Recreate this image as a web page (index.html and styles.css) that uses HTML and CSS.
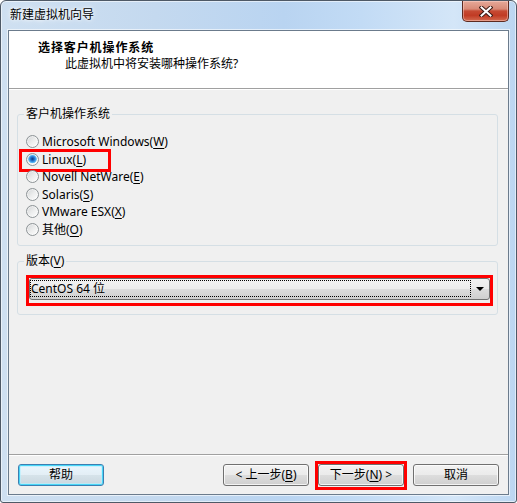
FILE: index.html
```html
<!DOCTYPE html>
<html lang="zh-CN">
<head>
<meta charset="utf-8">
<title>新建虚拟机向导</title>
<link rel="stylesheet" href="styles.css">
</head>
<body>
<div class="window">
  <div class="titlebar">
    <span class="title">新建虚拟机向导</span>
    <button class="close" aria-label="关闭">
      <svg width="14" height="11" viewBox="0 0 14 11">
        <path d="M2.5 1.5 L11.5 9.5 M11.5 1.5 L2.5 9.5" stroke="#3b1a14" stroke-width="4" stroke-linecap="square" fill="none"/>
        <path d="M2.5 1.5 L11.5 9.5 M11.5 1.5 L2.5 9.5" stroke="#ffffff" stroke-width="2" stroke-linecap="square" fill="none"/>
      </svg>
    </button>
  </div>
  <div class="client">
    <div class="header">
      <div class="h-title">选择客户机操作系统</div>
      <div class="h-sub">此虚拟机中将安装哪种操作系统?</div>
    </div>
    <div class="content">
      <fieldset class="group os">
        <legend>客户机操作系统</legend>
        <div class="options">
          <label class="opt"><span class="radio"></span><span>Microsoft Windows(<u>W</u>)</span></label>
          <label class="opt marked"><span class="radio checked"></span><span>Linux(<u>L</u>)</span></label>
          <label class="opt"><span class="radio"></span><span>Novell NetWare(<u>E</u>)</span></label>
          <label class="opt"><span class="radio"></span><span>Solaris(<u>S</u>)</span></label>
          <label class="opt"><span class="radio"></span><span>VMware ESX(<u>X</u>)</span></label>
          <label class="opt"><span class="radio"></span><span>其他(<u>O</u>)</span></label>
        </div>
      </fieldset>
      <fieldset class="group ver">
        <legend>版本(<u>V</u>)</legend>
        <div class="mark-combo">
          <div class="combo">
            <span class="combo-text">CentOS 64 位</span>
            <span class="combo-arrow"><span class="tri"></span></span>
          </div>
        </div>
      </fieldset>
    </div>
    <div class="footer">
      <button class="btn focus help">帮助</button>
      <button class="btn">&lt; 上一步(<u>B</u>)</button>
      <span class="mark"><button class="btn">下一步(<u>N</u>) &gt;</button></span>
      <button class="btn">取消</button>
    </div>
  </div>
</div>
</body>
</html>
```
FILE: styles.css
```css
* { box-sizing: border-box; }
html, body { margin: 0; padding: 0; }
body {
  width: 517px;
  height: 503px;
  overflow: hidden;
  font-family: "Noto Sans", "Noto Sans CJK SC", sans-serif;
  font-size: 12px;
  color: #000;
  background: #fff;
}
u { text-decoration: underline; text-underline-offset: 2px; }

.window {
  width: 517px;
  height: 503px;
  display: flex;
  flex-direction: column;
  padding: 0 7px 7px;
  border: 1px solid #4e5966;
  border-radius: 6px 6px 3px 3px;
  background: linear-gradient(to right, #cfe0f1 0%, #c4d9ef 30%, #b9d4f1 55%, #c2dbf5 70%, #d4e6f8 88%, #bcd6f1 100%);
  box-shadow: inset 0 0 0 1px rgba(255,255,255,0.55);
}

.titlebar {
  height: 29px;
  flex: none;
  display: flex;
  align-items: flex-start;
  justify-content: space-between;
}
.title {
  margin-top: 6px;
  padding-left: 2px;
  line-height: 16px;
  font-size: 12px;
  text-shadow: 0 0 6px #fff, 0 0 3px #fff;
}
.close {
  width: 47px;
  height: 21px;
  margin: 0;
  padding: 0;
  border: 1px solid #5d2a20;
  border-top: none;
  border-radius: 0 0 5px 5px;
  background: linear-gradient(#e6a999 0%, #d88a77 40%, #c64a33 50%, #c13b24 72%, #d36b50 100%);
  box-shadow: inset 0 0 0 1px rgba(255,220,210,0.45);
  display: flex;
  align-items: center;
  justify-content: center;
}
.close svg { display: block; }

.client {
  flex: 1;
  display: flex;
  flex-direction: column;
  border: 1px solid #6b7b8c;
  background: #f0f0f0;
  box-shadow: 0 0 0 1px rgba(255,255,255,0.6);
}

.header {
  height: 58px;
  flex: none;
  background: #fff;
  border-bottom: 1px solid #a0a0a0;
  box-shadow: 0 1px 0 #fff;
  padding: 9px 0 0 29px;
  line-height: 16px;
}
.h-title { font-weight: bold; letter-spacing: 0.9px; }
.h-sub { padding-left: 27px; }

.content {
  flex: 1;
  padding: 17px 10px 0 8px;
}

.group {
  margin: 0;
  padding: 0;
  min-width: 0;
  border: 1px solid #d5dfe5;
  border-radius: 3px;
}
.group legend {
  margin-left: 6px;
  padding: 0 2px;
  line-height: 16px;
}

.options { padding: 11px 0 7px 8px; }
.opt {
  height: 17.5px;
  display: flex;
  align-items: center;
  width: max-content;
  position: relative;
}
.radio {
  width: 13px;
  height: 13px;
  margin-right: 3px;
  border-radius: 50%;
  border: 1px solid #8d9396;
  background: linear-gradient(135deg, #d2d4d6 0%, #eceded 50%, #ffffff 100%);
  box-shadow: inset 0 0 0 1px rgba(255,255,255,0.5);
  flex: none;
}
.radio.checked {
  background:
    radial-gradient(circle at 50% 45%, #0d3a78 0, #1d63bb 1.5px, #3d98e6 3px, #6cc4f6 4px, rgba(108,196,246,0) 4.6px),
    linear-gradient(135deg, #d2d4d6 0%, #eceded 50%, #ffffff 100%);
}
.opt.marked::after {
  content: "";
  position: absolute;
  left: -7px;
  top: -2px;
  width: 86px;
  height: 17px;
  border: 3px solid #ff0000;
}

.ver { margin-top: 7px; padding: 6px 4px 8px 0; }
.mark-combo {
  margin-left: 8px;
  border: 3px solid #ff0000;
  padding-bottom: 3px;
}
.combo {
  height: 22px;
  display: flex;
  border: 1px solid #707070;
  border-radius: 3px;
  padding: 1px 0 2px 0;
  background: linear-gradient(#f2f2f2 0%, #ebebeb 50%, #dddddd 50%, #cfcfcf 100%);
}
.combo-text {
  flex: 1;
  border: 1px dotted #000;
  line-height: 15px;
  padding-left: 0;
  white-space: nowrap;
}
.combo-arrow {
  width: 18px;
  flex: none;
  display: flex;
  align-items: center;
  justify-content: center;
}
.tri {
  width: 0;
  height: 0;
  border-left: 4px solid transparent;
  border-right: 4px solid transparent;
  border-top: 4px solid #000;
  margin-top: 1px;
}

.footer {
  flex: none;
  display: flex;
  gap: 9px;
  border-top: 1px solid #a0a0a0;
  box-shadow: inset 0 1px 0 #fff;
  padding: 9px 9px 8px;
}
.btn {
  width: 86px;
  height: 22px;
  margin: 0;
  padding: 0;
  font: inherit;
  line-height: 18px;
  color: #000;
  border: 1px solid #707070;
  border-radius: 3px;
  background: linear-gradient(#f2f2f2 0%, #ebebeb 50%, #dddddd 50%, #cfcfcf 100%);
  box-shadow: inset 0 0 0 1px rgba(255,255,255,0.75);
  text-align: center;
}
.btn.help { margin-right: auto; }
.btn.focus {
  border-color: #3c7fb1;
  box-shadow: inset 0 0 0 1px #48d6f8, inset 0 0 0 2px rgba(180,240,255,0.6);
  background: linear-gradient(#eaf6fd 0%, #e3eef5 50%, #d6e3ea 50%, #cad7df 100%);
}
.mark {
  position: relative;
  display: flex;
}
.mark::after {
  content: "";
  position: absolute;
  left: -3px;
  top: -3px;
  right: -3px;
  bottom: -4px;
  border: 3px solid #ff0000;
}
```
